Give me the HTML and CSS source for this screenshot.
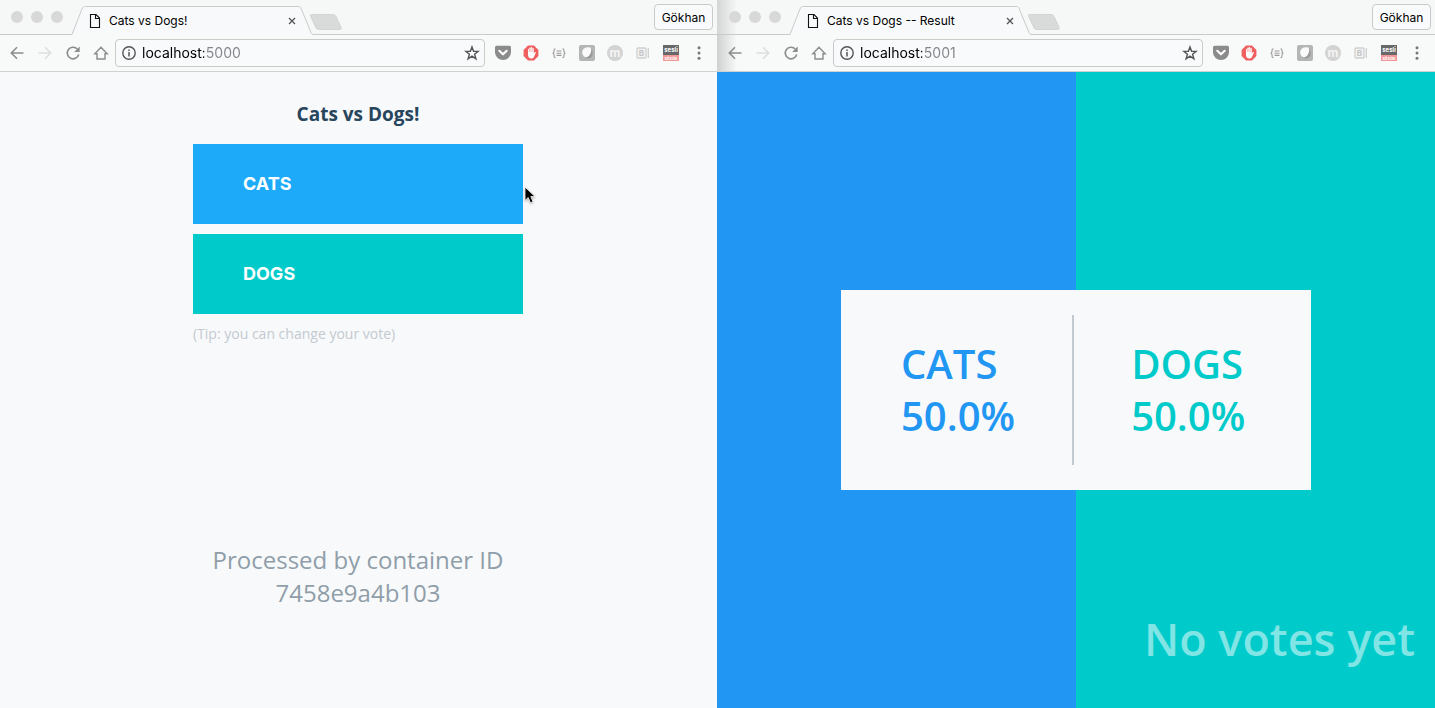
FILE: index.html
```html
<!DOCTYPE html>
<html lang="en">
<head>
<meta charset="utf-8">
<meta name="viewport" content="width=device-width, initial-scale=1">
<title>Cats vs Dogs!</title>
<link rel="stylesheet" href="styles.css">
</head>
<body>
<svg class="sprite" aria-hidden="true">
  <symbol id="i-tab" viewBox="0 0 242 29">
    <path d="M0 28.500 L10 3 C11 1 11.500 .5 13.500 .5 H226 C228 .5 228.500 1 229.300 3 L239 26.500 C239.700 28 240.300 28.500 242 28.500 V29 H0Z" fill="#f8f9fa"/>
    <path d="M0 28.500 L10 3 C11 1 11.500 .5 13.500 .5 H226 C228 .5 228.500 1 229.300 3 L239 26.500 C239.700 28 240.300 28.500 242 28.500" fill="none" stroke="#c9cbc9"/>
  </symbol>
  <symbol id="i-newtab" viewBox="0 0 34 18">
    <path d="M2.500 1.500 H24 Q26 1.500 27 3.500 L32 14 Q32.800 16.500 31 16.500 H9.500 Q7.500 16.500 6.800 14.500 L1.500 3 Q1 1.500 2.500 1.500Z" fill="#d9dada" stroke="#cdcfcd" stroke-width=".8"/>
  </symbol>
  <symbol id="i-file" viewBox="0 0 12 16">
    <path d="M1.500 1.500 H7 L10.500 5 V14.500 H1.500Z M6.500 1.500 V5.500 H10.500" fill="none" stroke="#111" stroke-width="1.100"/>
  </symbol>
  <symbol id="i-close" viewBox="0 0 10 10"><path d="M2 2 L8 8 M8 2 L2 8" stroke="#555" stroke-width="1.300"/></symbol>
  <symbol id="i-back" viewBox="0 0 16 16"><path d="M14.500 8 H2.500 M8 2.300 L2.300 8 L8 13.700" fill="none" stroke="currentColor" stroke-width="1.600"/></symbol>
  <symbol id="i-forward" viewBox="0 0 16 16"><path d="M1.500 8 H13.500 M8 2.300 L13.700 8 L8 13.700" fill="none" stroke="currentColor" stroke-width="1.600"/></symbol>
  <symbol id="i-reload" viewBox="0 0 16 16">
    <path d="M12.300 4 A5.800 5.800 0 1 0 13.700 9.500" fill="none" stroke="#8b8c8b" stroke-width="1.600"/><path d="M14.700 1.500 V7 H9.200Z" fill="#8b8c8b"/>
  </symbol>
  <symbol id="i-home" viewBox="0 0 16 16"><path d="M8 2.300 L1.800 8.700 H4 V14 H12 V8.700 H14.200Z" fill="none" stroke="#8b8c8b" stroke-width="1.400"/></symbol>
  <symbol id="i-info" viewBox="0 0 16 16"><circle cx="8" cy="8" r="6.200" fill="none" stroke="#555" stroke-width="1.400"/><path d="M8 7 V11.500 M8 4.500 V6" stroke="#555" stroke-width="1.500"/></symbol>
  <symbol id="i-star" viewBox="0 0 16 16"><path d="M8 1.900 L9.600 6.200 L14.200 6.400 L10.600 9.300 L11.900 13.800 L8 11.200 L4.100 13.800 L5.400 9.300 L1.800 6.400 L6.400 6.200Z" fill="none" stroke="#555" stroke-width="1.400"/></symbol>
  <symbol id="i-pocket" viewBox="0 0 16 16"><path d="M1.500 .8 H14.500 Q16 .8 16 2.300 V7.200 A8 7.800 0 0 1 0 7.200 V2.300 Q0 .8 1.500 .8Z" fill="#8b8b8b"/><path d="M4.300 5.800 L8 9.300 L11.700 5.800" fill="none" stroke="#fff" stroke-width="2.100" stroke-linecap="round" stroke-linejoin="round"/></symbol>
  <symbol id="i-hand" viewBox="0 0 16 16"><path d="M5 .5 H11 L15.400 5 V11 L11 15.500 H5 L.6 11 V5Z" fill="#f05f5f"/><path d="M5 9.800 V4.600 Q5 3.800 5.700 3.800 Q6.300 3.800 6.300 4.600 V3.200 Q6.300 2.400 7 2.400 Q7.600 2.400 7.700 3.200 Q7.800 2 8.500 2 Q9.300 2 9.300 3.200 V3.800 Q9.500 3.100 10.100 3.100 Q10.800 3.200 10.800 4 V8.500 L11.700 7.200 Q12.500 6.600 13 7.300 L10.800 12.200 Q10 13.500 8.300 13.500 Q5 13.500 5 9.800Z" fill="#fff"/><path d="M6.400 4 V7 M7.800 3.500 V7 M9.300 3.500 V7" stroke="#f05f5f" stroke-width=".4"/></symbol>
  <symbol id="i-braces" viewBox="0 0 16 16"><path d="M4.500 3.800 Q3 3.800 3 5.200 V6.800 Q3 8 1.600 8.200 Q3 8.400 3 9.600 V11.200 Q3 12.600 4.500 12.600 M11.500 3.800 Q13 3.800 13 5.200 V6.800 Q13 8 14.400 8.200 Q13 8.400 13 9.600 V11.200 Q13 12.600 11.500 12.600 M5.500 6 H10.500 M5.500 8.200 H10.500 M5.500 10.400 H10.500" fill="none" stroke="#9a9a9a" stroke-width="1.100"/></symbol>
  <symbol id="i-leaf" viewBox="0 0 16 16"><rect width="16" height="16" rx="2" fill="#b4b5b5"/><path d="M3.600 9.500 Q2.300 6 5 3.500 Q7.500 1.700 11.500 2.600 Q13.200 5 12 8 Q10.500 11.800 7 12.200 Q4.500 12 3.600 9.500Z" fill="#fafafa"/><path d="M12.600 3.500 Q14.200 6 13.600 10 Q12.500 13.300 8 13.600 L6.500 12.800 Q12 12 12.600 3.500Z" fill="#999a9a"/></symbol>
  <symbol id="i-menu" viewBox="0 0 16 16"><circle cx="8" cy="2.800" r="1.500" fill="#777"/><circle cx="8" cy="8" r="1.500" fill="#777"/><circle cx="8" cy="13.200" r="1.500" fill="#777"/></symbol>
</svg>

<main class="desktop">
  <section class="window" aria-label="Voting window">
    <header class="tabstrip">
      <div class="lights"><span class="light"></span><span class="light"></span><span class="light"></span></div>
      <div class="tab">
        <svg class="tab-shape" aria-hidden="true"><use href="#i-tab"/></svg>
        <svg class="file" aria-hidden="true"><use href="#i-file"/></svg>
        <span class="tab-title">Cats vs Dogs!</span>
        <button class="close" aria-label="Close tab"><svg aria-hidden="true"><use href="#i-close"/></svg></button>
      </div>
      <button class="newtab" aria-label="New tab"><svg aria-hidden="true"><use href="#i-newtab"/></svg></button>
      <button class="user">Gökhan</button>
    </header>
    <nav class="toolbar" aria-label="Browser toolbar">
      <button class="tool" aria-label="Back"><svg><use href="#i-back"/></svg></button>
      <button class="tool tool-off" aria-label="Forward"><svg><use href="#i-forward"/></svg></button>
      <button class="tool" aria-label="Reload"><svg><use href="#i-reload"/></svg></button>
      <button class="tool" aria-label="Home"><svg><use href="#i-home"/></svg></button>
      <div class="address">
        <svg aria-hidden="true"><use href="#i-info"/></svg>
        <input class="url" type="text" value="localhost:5000" aria-label="Address">
        <button class="star" aria-label="Bookmark"><svg><use href="#i-star"/></svg></button>
      </div>
      <button class="tool" aria-label="Pocket"><svg><use href="#i-pocket"/></svg></button>
      <button class="tool" aria-label="Ad blocker"><svg><use href="#i-hand"/></svg></button>
      <button class="tool" aria-label="JSON viewer"><svg><use href="#i-braces"/></svg></button>
      <button class="tool" aria-label="Leaf"><svg><use href="#i-leaf"/></svg></button>
      <button class="tool" aria-label="Extension m"><svg viewBox="0 0 16 16"><circle cx="8" cy="8" r="8" fill="#d2d3d2"/><text x="8" y="12" text-anchor="middle" class="glyph-m">m</text></svg></button>
      <button class="tool" aria-label="Extension B"><svg viewBox="0 0 16 16"><rect x="2" y="3" width="9" height="10" rx="1" fill="#f3f3f3" stroke="#cfd0cf" stroke-width="1.300"/><path d="M13.300 3 V13" stroke="#cfd0cf" stroke-width="1.300"/><text x="6.500" y="11" text-anchor="middle" class="glyph-b">B</text></svg></button>
      <button class="tool" aria-label="Dictionary"><svg viewBox="0 0 16 16"><rect width="16" height="10" fill="#686868"/><rect y="10" width="16" height="6" fill="#f29797"/><text x="8" y="7" text-anchor="middle" class="glyph-top">sesli</text><text x="8" y="14.500" text-anchor="middle" class="glyph-bottom">sözlük</text></svg></button>
      <button class="tool" aria-label="Menu"><svg><use href="#i-menu"/></svg></button>
    </nav>
    <div class="page vote-page">
      <form class="vote">
        <h1 class="vote-title">Cats vs Dogs!</h1>
        <button class="option option-cats" type="button">CATS</button>
        <button class="option option-dogs" type="button">DOGS</button>
        <p class="tip">(Tip: you can change your vote)</p>
      </form>
      <p class="container-id">Processed by container ID<br>7458e9a4b103</p>
    </div>
    <svg class="pointer" viewBox="0 0 14 20" aria-hidden="true"><path d="M1 1 V14.500 L4.200 11.500 L6.500 16.800 L9 15.700 L6.800 10.600 H11Z" fill="#000" stroke="#fff" stroke-width=".8"/></svg>
  </section>

  <section class="window window-result" aria-label="Result window">
    <header class="tabstrip">
      <div class="lights"><span class="light"></span><span class="light"></span><span class="light"></span></div>
      <div class="tab">
        <svg class="tab-shape" aria-hidden="true"><use href="#i-tab"/></svg>
        <svg class="file" aria-hidden="true"><use href="#i-file"/></svg>
        <span class="tab-title">Cats vs Dogs -- Result</span>
        <button class="close" aria-label="Close tab"><svg aria-hidden="true"><use href="#i-close"/></svg></button>
      </div>
      <button class="newtab" aria-label="New tab"><svg aria-hidden="true"><use href="#i-newtab"/></svg></button>
      <button class="user">Gökhan</button>
    </header>
    <nav class="toolbar" aria-label="Browser toolbar">
      <button class="tool" aria-label="Back"><svg><use href="#i-back"/></svg></button>
      <button class="tool tool-off" aria-label="Forward"><svg><use href="#i-forward"/></svg></button>
      <button class="tool" aria-label="Reload"><svg><use href="#i-reload"/></svg></button>
      <button class="tool" aria-label="Home"><svg><use href="#i-home"/></svg></button>
      <div class="address">
        <svg aria-hidden="true"><use href="#i-info"/></svg>
        <input class="url" type="text" value="localhost:5001" aria-label="Address">
        <button class="star" aria-label="Bookmark"><svg><use href="#i-star"/></svg></button>
      </div>
      <button class="tool" aria-label="Pocket"><svg><use href="#i-pocket"/></svg></button>
      <button class="tool" aria-label="Ad blocker"><svg><use href="#i-hand"/></svg></button>
      <button class="tool" aria-label="JSON viewer"><svg><use href="#i-braces"/></svg></button>
      <button class="tool" aria-label="Leaf"><svg><use href="#i-leaf"/></svg></button>
      <button class="tool" aria-label="Extension m"><svg viewBox="0 0 16 16"><circle cx="8" cy="8" r="8" fill="#d2d3d2"/><text x="8" y="12" text-anchor="middle" class="glyph-m">m</text></svg></button>
      <button class="tool" aria-label="Extension B"><svg viewBox="0 0 16 16"><rect x="2" y="3" width="9" height="10" rx="1" fill="#f3f3f3" stroke="#cfd0cf" stroke-width="1.300"/><path d="M13.300 3 V13" stroke="#cfd0cf" stroke-width="1.300"/><text x="6.500" y="11" text-anchor="middle" class="glyph-b">B</text></svg></button>
      <button class="tool" aria-label="Dictionary"><svg viewBox="0 0 16 16"><rect width="16" height="10" fill="#686868"/><rect y="10" width="16" height="6" fill="#f29797"/><text x="8" y="7" text-anchor="middle" class="glyph-top">sesli</text><text x="8" y="14.500" text-anchor="middle" class="glyph-bottom">sözlük</text></svg></button>
      <button class="tool" aria-label="Menu"><svg><use href="#i-menu"/></svg></button>
    </nav>
    <div class="page result-page">
      <div class="card">
        <div class="score score-cats"><div>CATS</div><div>50.0%</div></div>
        <div class="divider"></div>
        <div class="score score-dogs"><div>DOGS</div><div>50.0%</div></div>
      </div>
      <p class="votes">No votes yet</p>
    </div>
  </section>
</main>
</body>
</html>
```

FILE: styles.css
```css
* { box-sizing: border-box; }
body { margin: 0; font-family: "Open Sans", "Noto Sans", sans-serif; background: #f8f9fb; }
h1, p { margin: 0; }
button { border: 0; padding: 0; margin: 0; background: none; font: inherit; color: inherit; }
svg { display: block; }
.sprite { position: absolute; width: 0; height: 0; }

.desktop { display: grid; grid-template-columns: 717fr 718fr; min-height: 100vh; }
.window { position: relative; display: flex; flex-direction: column; min-width: 0; }

/* Tab strip */
.tabstrip {
  display: flex; align-items: flex-end; height: 35px; padding: 0 4px 0 11px;
  background: #f6f7f7; border-bottom: 1px solid #c9cbc9;
  font-family: Inter, Roboto, sans-serif; font-size: 12px; color: #000;
}
.lights { display: flex; gap: 8px; align-self: center; }
.light { width: 12px; height: 12px; border-radius: 50%; background: #d8d8d8; }
.tab { position: relative; display: flex; align-items: center; width: 242px; height: 29px; margin: 0 0 -1px 9px; padding: 0 17px; }
.tab-shape { position: absolute; top: 0; left: 0; width: 242px; height: 29px; }
.file { position: relative; width: 12px; height: 16px; }
.tab-title { position: relative; flex: 1; margin-left: 8px; white-space: nowrap; }
.close { position: relative; }
.close svg { width: 10px; height: 10px; }
.newtab { align-self: center; margin: 9px 0 0 -5px; }
.newtab svg { width: 34px; height: 18px; }
.user { align-self: center; width: 59px; height: 26px; margin-left: auto; border: 1px solid #c9cbc9; border-radius: 4px; background: #f9fafb; }

/* Toolbar */
.toolbar {
  display: flex; align-items: center; height: 37px; padding: 0 4px 0 3px;
  background: #f8f9f9; border-bottom: 1px solid #d0d2d0; color: #8b8c8b;
}
.tool { display: grid; place-items: center; flex: none; width: 28px; height: 28px; }
.tool svg { width: 16px; height: 16px; }
.tool-off { color: #dcdedf; }
.address {
  display: flex; align-items: center; flex: 1; min-width: 0; height: 28px; margin-right: 4px; padding: 0 4px 0 5px;
  border: 1px solid #c9cbc9; border-radius: 4px; background: #f9fafc;
}
.address svg { flex: none; width: 16px; height: 16px; }
/* Host is drawn dark, port is drawn grey */
.url {
  flex: 1; min-width: 0; height: 24px; margin-left: 5px; padding: 0; border: 0; outline: 0;
  font: 14px/24px Inter, Roboto, sans-serif; color: #000;
  background: linear-gradient(to right, #000 62px, #808488 62px);
  -webkit-background-clip: text; background-clip: text; -webkit-text-fill-color: transparent;
}
.glyph-m { font: bold 12px Inter, sans-serif; fill: #f4f4f4; }
.glyph-b { font: bold 8px Inter, sans-serif; fill: #c4c5c4; }
.glyph-top { font: bold 6px Inter, sans-serif; fill: #fff; }
.glyph-bottom { font: bold 4px Inter, sans-serif; fill: #fff; }

.page { flex: 1; }

/* Voting */
.vote-page { display: flex; flex-direction: column; align-items: center; padding: 28px 21px 28px 20px; background: #f8f9fb; }
.vote { display: flex; flex-direction: column; width: 100%; max-width: 330px; gap: 10px; }
.vote-title { margin-bottom: 6px; font-size: 19px; line-height: 28px; font-weight: 700; text-align: center; color: #27455c; }
.option { height: 80px; padding: 0 50px; font: 700 18px/24px Inter, sans-serif; text-align: left; color: #fff; }
.option-cats { background: #1caaf9; }
.option-dogs { background: #00cbca; }
.tip { font-size: 14px; line-height: 20px; color: #c3cad0; }
.container-id { margin-top: 199px; font-size: 24px; line-height: 33px; text-align: center; color: #8f9ea9; }
.pointer { position: absolute; left: 524px; top: 186px; width: 14px; height: 20px; filter: drop-shadow(0 1px 1px rgba(0, 0, 0, .3)); }

/* Results */
.window-result .tabstrip { padding-left: 12px; background: linear-gradient(to right, #d4d5d5, #f6f7f7 20px); }
.window-result .toolbar { padding-left: 4px; background: linear-gradient(to right, #cfd0d0, #f8f9f9 20px); }
.result-page { position: relative; display: grid; place-items: center; background: linear-gradient(to right, #2196f3 50%, #00cbca 50%); }
.card { display: flex; align-items: center; gap: 57px; width: 470px; max-width: 90%; padding: 25px 60px; background: #f8f9fb; }
.divider { align-self: stretch; width: 2px; min-height: 150px; background: #c2c9d0; }
.score { font-size: 40px; line-height: 52px; font-weight: 600; }
.score-cats { color: #2196f3; }
.score-dogs { color: #00cbca; }
.votes { position: absolute; right: 20px; bottom: 37px; font-size: 45px; line-height: 64px; font-weight: 600; color: #80e5e4; }
```
